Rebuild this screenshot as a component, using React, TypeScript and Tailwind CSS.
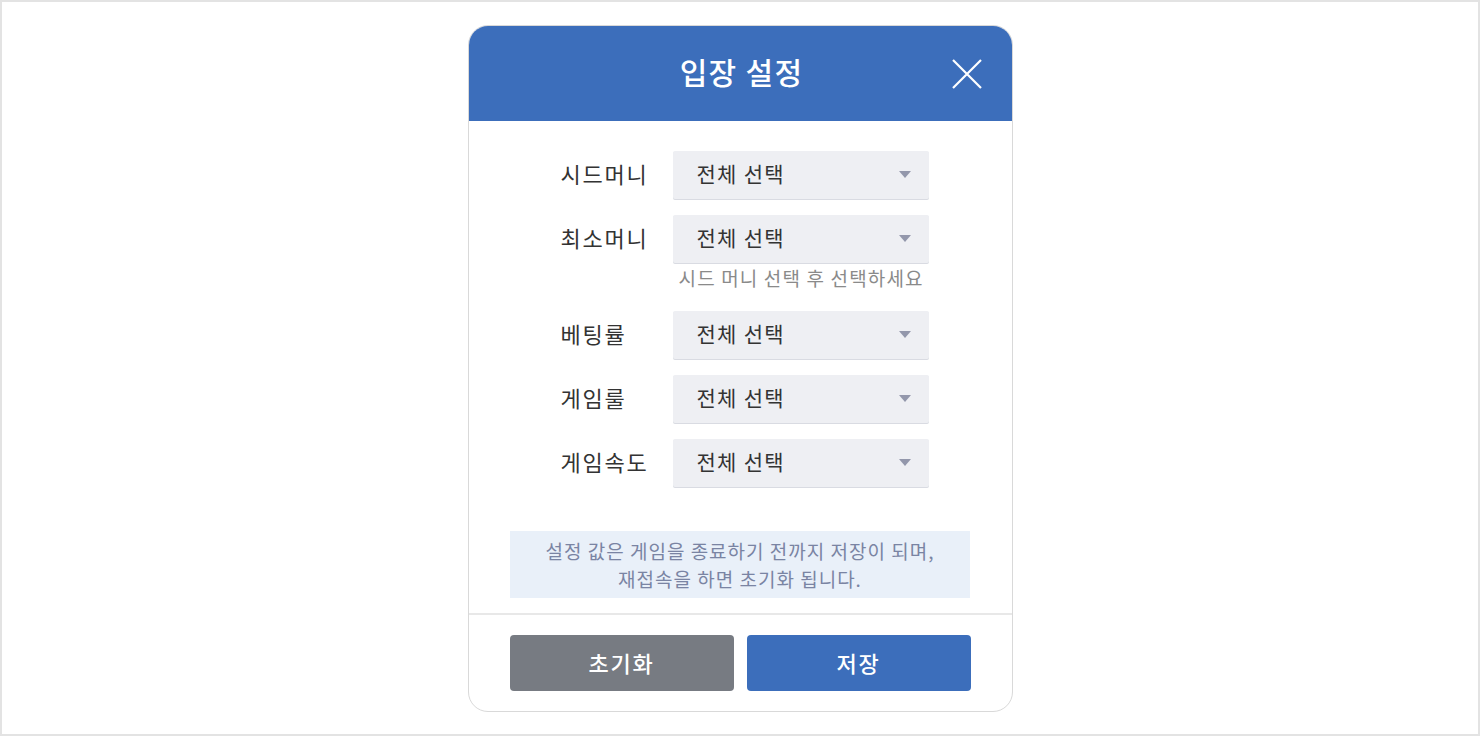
import React from "react";

const font = { fontFamily: '"Noto Sans CJK KR", "Noto Sans", sans-serif' };

function Select() {
  return (
    <div className="flex h-[48px] w-[256px] items-center justify-between bg-[#eeeff3] pb-[2px] pl-[24px] pr-[18px] shadow-[0_1px_0_#d9dbe2] rounded-[2px]">
      <span className="text-[21px] tracking-[1.3px] text-[#333333]">전체 선택</span>
      <svg width="12" height="7" viewBox="0 0 12 7">
        <path d="M0 0 L12 0 L6 7 Z" fill="#9397ab" />
      </svg>
    </div>
  );
}

function Row({ label }: { label: string }) {
  return (
    <div className="flex items-center">
      <div className="w-[112px] pb-[3px] text-[22px] tracking-[1.8px] text-[#333333]">{label}</div>
      <Select />
    </div>
  );
}

export default function App() {
  return (
    <div
      className="flex h-[736px] w-[1480px] items-start justify-center border-2 border-[#e3e3e3] bg-white pt-[23px]"
      style={font}
    >
      <div className="w-[545px] overflow-hidden rounded-[20px] border border-[#d9d9d9] bg-white">
        <div className="relative flex h-[95px] items-center justify-center bg-[#3c6ebb] pb-[4px] pl-[3px]">
          <span className="text-[30px] font-medium tracking-[1.3px] text-white">입장 설정</span>
          <svg
            className="absolute right-[29px] top-[32px]"
            width="32"
            height="32"
            viewBox="0 0 32 32"
          >
            <path d="M2 2 L30 30 M30 2 L2 30" stroke="white" strokeWidth="2.2" />
          </svg>
        </div>
        <div className="flex flex-col items-center pt-[30px]">
          <div className="ml-[9px] flex flex-col gap-[16px]">
            <Row label="시드머니" />
            <div className="flex flex-col">
              <Row label="최소머니" />
              <div className="flex h-[32px] items-center pb-[2px] pl-[118px] text-[19px] tracking-[1.15px] text-[#8a8a8a]">
                시드 머니 선택 후 선택하세요
              </div>
            </div>
            <Row label="베팅률" />
            <Row label="게임룰" />
            <Row label="게임속도" />
          </div>
          <div className="mt-[44px] flex h-[67px] w-[460px] flex-col items-center justify-center bg-[#e9f0f9] text-[19px] leading-[28px] tracking-[1px] text-[#7a84a3]">
            <span>설정 값은 게임을 종료하기 전까지 저장이 되며,</span>
            <span>재접속을 하면 초기화 됩니다.</span>
          </div>
        </div>
        <div className="mt-[15px] h-[2px] bg-[#e8e8e8]" />
        <div className="flex justify-center gap-[13px] pb-[20px] pt-[20px]">
          <button className="h-[56px] w-[224px] rounded-[4px] bg-[#777b82] pb-[2px] text-[22px] font-medium tracking-[1.8px] text-white">
            초기화
          </button>
          <button className="h-[56px] w-[224px] rounded-[4px] bg-[#3c6ebb] pb-[2px] text-[22px] font-medium tracking-[1.8px] text-white">
            저장
          </button>
        </div>
      </div>
    </div>
  );
}
